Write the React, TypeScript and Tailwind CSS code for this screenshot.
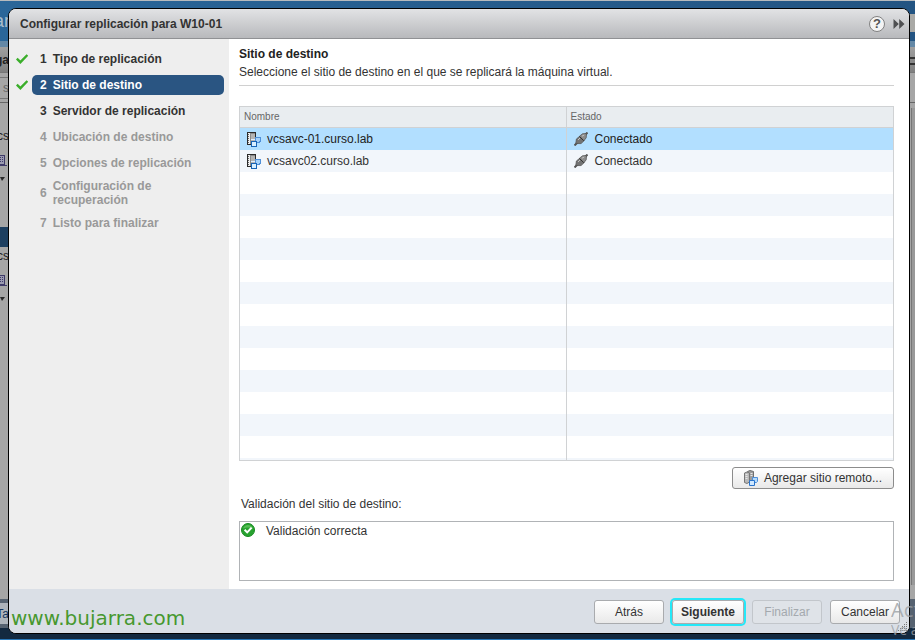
import { useState } from "react";
import clsx from "clsx";

const steps = [
  { name: "Tipo de replicación", done: true, enabled: true },
  { name: "Sitio de destino", done: true, enabled: true },
  { name: "Servidor de replicación", done: false, enabled: true },
  { name: "Ubicación de destino", done: false, enabled: false },
  { name: "Opciones de replicación", done: false, enabled: false },
  { name: "Configuración de recuperación", done: false, enabled: false },
  { name: "Listo para finalizar", done: false, enabled: false },
];

const sites = [
  { name: "vcsavc-01.curso.lab", status: "Conectado" },
  { name: "vcsavc02.curso.lab", status: "Conectado" },
];

// the grid always shows striped rows, even without data
const emptyRows = Array.from({ length: 14 }, (_, i) => i + sites.length);

function StepCheck() {
  return (
    <svg className="w-3 h-3" viewBox="0 0 12 12" fill="none" stroke="#3aae2a" strokeWidth="2.4">
      <path d="M0.8 5.6 4.4 9.2 11.4 2" />
    </svg>
  );
}

function ServerIcon() {
  return (
    <svg className="w-[14px] h-4 shrink-0" viewBox="0 0 14 16" shapeRendering="crispEdges">
      <path d="M0 1h9v13H0z" fill="#2b2b2b" />
      <path d="M1 2h2v11H1z" fill="#f0f0f0" />
      <path d="M1 3h1v1H1zM1 5h1v1H1zM1 7h1v1H1zM1 9h1v1H1zM1 11h1v1H1z" fill="#666" />
      <path d="M3 2h5v11H3z" fill="#b4b4b4" />
      <path d="M3 2h5v1H3zM3 2h1v11H3z" fill="#8a8a8a" />
      <path d="M8 6h6v5h-1v1H8z" fill="#4f8fd8" />
      <path d="M9 7h4v3h-1v1H9z" fill="#a8d3fa" />
      <path d="M4 10h6v6H4z" fill="#1763b5" />
      <path d="M5 11h4v4H5z" fill="#d9efff" />
      <path d="M4 8h4v1H4z" fill="#e0efff" />
    </svg>
  );
}

function AddServerIcon() {
  return (
    <svg className="w-[14px] h-4 shrink-0" viewBox="0 0 14 16">
      <path d="M3.5 1.5 6 0.5 9.5 1.5V11L7 13 3.5 12z" fill="#9c9c9c" stroke="#6e6e6e" />
      <path d="M0.5 3 3 2 5.5 3v9L3 13.5.5 12.5z" fill="#b9b9b9" stroke="#777" />
      <path d="M1.5 4.5h2M1.5 6.5h2M1.5 8.5h2M6.5 3.5h2M6.5 5.5h2" stroke="#e6e6e6" />
      <path d="M8.5 7.5h5v4l-1 1h-4z" fill="#b5dafa" stroke="#4f8fd8" />
      <path d="M5.5 10.5h5v5h-5z" fill="#cfe8ff" stroke="#2a74cc" />
    </svg>
  );
}

function PlugIcon() {
  return (
    <svg className="w-[14px] h-[14px] shrink-0" viewBox="0 0 14 14">
      <path d="M0.5 13.5 3.5 10.5M10 4l3.5-3.5" stroke="#555" strokeWidth="2" />
      <path d="M1.8 11.5 2.4 7l3.4-2.8 4.4 4.4L7 11.6z" fill="#737373" stroke="#555" strokeWidth=".8" />
      <path d="M5.5 4.2 8.5 1.8 12.5 1.5 12.2 5.8 9.9 8.7z" fill="#8c8c8c" stroke="#555" strokeWidth=".8" />
      <path d="M5.5 4.5l4.2 4.2" stroke="#333" />
      <path d="M4 8l2-2M8 4.2l2.2-1.2" stroke="#c4c4c4" />
    </svg>
  );
}

function OkIcon() {
  return (
    <svg className="w-[14px] h-[14px] shrink-0" viewBox="0 0 14 14">
      <circle cx="7" cy="7" r="6.5" fill="#27a22f" stroke="#168a20" />
      <path d="M2 5.5a5.3 5.3 0 0 1 10 0C9 4 5 4 2 5.5z" fill="#55bd55" />
      <path d="M3.6 6.8 6.2 9.4 10.6 4.6" fill="none" stroke="#fff" strokeWidth="2" />
    </svg>
  );
}

function TreeIcon() {
  return (
    <svg className="w-[9px] h-[11px] shrink-0" viewBox="0 0 9 11" shapeRendering="crispEdges">
      <path d="M1 0h6v10H1z" fill="#3e3a68" />
      <path d="M2 1h4v8H2z" fill="#9a9ab0" />
      <path d="M2 2h1v1H2zM4 2h1v1H4zM2 4h1v1H2zM4 4h1v1H4zM2 6h1v1H2zM4 6h1v1H4z" fill="#3e3a68" />
      <path d="M0 10h9v1H0z" fill="#3e3a68" />
    </svg>
  );
}

function TreeGroup() {
  return (
    <div className="flex flex-col items-end">
      <span className="h-[18px] leading-[18px]">vcs</span>
      <div className="h-[30px] flex items-center mr-[2px]">
        <TreeIcon />
      </div>
      <svg className="w-[9px] h-3 shrink-0" viewBox="0 0 9 12">
        <path d="M0 2h5L2 6z" fill="#2a2a2a" />
        <path d="M8.5 0v11" stroke="#2a2a2a" />
      </svg>
    </div>
  );
}

// dimmed application behind the dialog, only its edges stay visible
function Backdrop() {
  return (
    <div className="absolute inset-0 flex flex-col bg-[#a6a6a6] text-xs text-[#222]" aria-hidden="true">
      <div className="h-px bg-[#b7babd]" />
      <div className="h-10 bg-linear-to-r from-[#2a6699] to-[#235482] flex justify-between">
        <div className="w-[10px] flex items-center justify-end overflow-hidden text-lg text-[#a9bccb]">ar</div>
        <div className="w-[10px] h-[18px] mt-[13px] bg-[#a9a9a6]" />
      </div>
      <div className="h-[6px] bg-[#6488a6]" />
      <div className="h-[26px] flex justify-between border-b border-[#777] bg-linear-to-b from-[#a0a0a0] to-[#7f7f7f]">
        <div className="w-[9px] flex items-center justify-end overflow-hidden font-bold">ga</div>
        <div className="w-[10px] h-2 mt-[10px] border-y-2 border-[#333] bg-[#888]" />
      </div>
      <div className="h-[30px] flex justify-between border-b border-[#666]">
        <div className="w-[9px] h-[22px] mt-1 flex items-center justify-end overflow-hidden border-y border-[#777] text-[#666]">s</div>
      </div>
      <div className="flex-1 flex justify-between">
        <div className="w-[9px] flex flex-col pt-6 overflow-hidden">
          <TreeGroup />
          <div className="h-5 mt-10 bg-[#1d3f60] shrink-0" />
          <TreeGroup />
        </div>
        <div className="w-1 mt-[5px] mb-[14px] border-l border-[#777] bg-[#999]" />
      </div>
      <div className="h-[29px] flex justify-between bg-[#566270]">
        <div className="w-[9px] my-1 flex items-center justify-end overflow-hidden bg-[#adb3ba] text-[#14345c]">Ta</div>
      </div>
      <div className="h-[11px] bg-[#13293f]" />
      <div className="h-px bg-[#2a78b8]" />
    </div>
  );
}

const buttonClass =
  "h-6 rounded-[3px] border border-[#a9abae] bg-linear-to-b from-white to-[#e9e9e9] text-[#333] text-center";

export default function App() {
  const [step, setStep] = useState(1);
  const [selected, setSelected] = useState(0);

  return (
    <div className="relative h-screen flex overflow-hidden pt-2 pb-[6px] pl-2 pr-[5px] font-['Liberation_Sans',Arial,sans-serif] text-xs text-[#333]">
      <Backdrop />

      <div role="dialog" className="relative flex-1 flex flex-col rounded-lg border border-black bg-white overflow-hidden">
        {/* Title bar */}
        <header className="h-[30px] shrink-0 flex items-center justify-between pl-[11px] pr-1 border-b border-[#909194] bg-linear-to-b from-[#e2e3e5] to-[#b8b9bc]">
          <h1 className="font-bold">Configurar replicación para W10-01</h1>
          <div className="flex items-center gap-2">
            <button
              className="w-4 h-4 rounded-full border border-[#808080] bg-[#f4f4f4] font-bold text-[13px] leading-[14px] text-[#555]"
              aria-label="Ayuda"
            >
              ?
            </button>
            <button aria-label="Expandir">
              <svg className="w-3 h-[10px]" viewBox="0 0 12 10" fill="#4f5052">
                <path d="M0.5 0 5.8 5 .5 10zM6.2 0 11.5 5 6.2 10z" />
              </svg>
            </button>
          </div>
        </header>

        <div className="flex-1 min-h-0 flex">
          {/* Steps */}
          <nav className="w-[220px] shrink-0 bg-[#eee] pt-[10px] pl-[7px] pr-[5px]">
            <ol className="flex flex-col gap-[6px] font-bold leading-[14px]">
              {steps.map((item, i) => (
                <li key={item.name} className="flex items-center gap-1">
                  <span className="w-3 shrink-0">{item.done && <StepCheck />}</span>
                  <button
                    disabled={!item.enabled}
                    onClick={() => setStep(i)}
                    className={clsx(
                      "flex-1 min-h-5 flex items-center gap-[6px] px-2 rounded-[5px] text-left",
                      i === step && "bg-[#2a5582] text-white",
                      !item.enabled && "text-[#999]"
                    )}
                  >
                    <span>{i + 1}</span>
                    <span>{item.name}</span>
                  </button>
                </li>
              ))}
            </ol>
          </nav>

          {/* Page content */}
          <main className="flex-1 min-w-0 flex flex-col pt-[6px] pb-2 pl-[10px] pr-[15px]">
            <div className="pb-1 border-b border-[#d0d0d0] leading-[18px]">
              <h2 className="font-bold text-[#222]">Sitio de destino</h2>
              <p>Seleccione el sitio de destino en el que se replicará la máquina virtual.</p>
            </div>

            <div className="mt-5 flex-1 min-h-0 overflow-hidden border border-[#d0d2d4]">
              <table className="w-full table-fixed border-separate border-spacing-0">
                <thead>
                  <tr className="h-[21px] bg-[#e9edf0] text-[10px] leading-4 text-[#666] text-left">
                    <th className="p-0 pl-1 font-normal border-r border-b border-[#d0d2d4]">Nombre</th>
                    <th className="p-0 pl-1 font-normal border-b border-[#d0d2d4]">Estado</th>
                  </tr>
                </thead>
                <tbody>
                  {sites.map((site, i) => (
                    <tr
                      key={site.name}
                      onClick={() => setSelected(i)}
                      className={clsx("h-[22px]", i === selected ? "bg-[#b2dfff] text-[#222]" : "even:bg-[#f2f6fb]")}
                    >
                      <td className="p-0 pl-[7px] border-r border-[#d0d2d4]">
                        <div className="flex items-center gap-[6px]">
                          <ServerIcon />
                          {site.name}
                        </div>
                      </td>
                      <td className="p-0 pl-[7px]">
                        <div className="flex items-center gap-[7px]">
                          <PlugIcon />
                          {site.status}
                        </div>
                      </td>
                    </tr>
                  ))}
                  {emptyRows.map((row) => (
                    <tr key={row} className="h-[22px] even:bg-[#f2f6fb]">
                      <td className="p-0 border-r border-[#d0d2d4]" />
                      <td className="p-0" />
                    </tr>
                  ))}
                </tbody>
              </table>
            </div>

            <button className="mt-[6px] h-[22px] shrink-0 self-end flex items-center gap-[6px] px-[11px] rounded-[3px] border border-[#8c8c8c] bg-linear-to-b from-white to-[#e9e9e9]">
              <AddServerIcon />
              Agregar sitio remoto...
            </button>

            <h3 className="mt-[6px] pl-[2px] leading-[18px]">Validación del sitio de destino:</h3>
            <div className="mt-2 h-[60px] shrink-0 flex items-start gap-[11px] p-px border border-[#b0b3b6]">
              <OkIcon />
              <p className="leading-4">Validación correcta</p>
            </div>
          </main>
        </div>

        {/* Footer */}
        <footer className="h-11 shrink-0 flex items-center justify-between pt-[2px] pl-[2px] pr-[9px] bg-[#dadfe6]">
          <span className="pt-3 font-['DejaVu_Sans',sans-serif] text-xl text-[#47982f]">www.bujarra.com</span>
          <div className="flex gap-2">
            <button className={clsx(buttonClass, "w-[70px]")} onClick={() => setStep(Math.max(step - 1, 0))}>
              Atrás
            </button>
            <button
              className={clsx(buttonClass, "w-[72px] font-bold ring-2 ring-[#25e8f8]")}
              onClick={() => setStep(Math.min(step + 1, 2))}
            >
              Siguiente
            </button>
            <button
              disabled
              className="w-[70px] h-6 rounded-[3px] border border-[#c2c6cb] bg-[#dfe3e8] text-[#a4a9ae] text-center"
            >
              Finalizar
            </button>
            <button className={clsx(buttonClass, "w-[70px]")}>Cancelar</button>
          </div>
        </footer>

        {/* Resize grip */}
        <svg className="absolute right-[2px] bottom-[2px] w-[9px] h-[9px]" viewBox="0 0 9 9" fill="#777" shapeRendering="crispEdges">
          <path d="M8 0h1v1H8zM6 2h1v1H6zM8 2h1v1H8zM4 4h1v1H4zM6 4h1v1H6zM8 4h1v1H8zM2 6h1v1H2zM4 6h1v1H4zM6 6h1v1H6zM8 6h1v1H8zM0 8h1v1H0zM2 8h1v1H2zM4 8h1v1H4zM6 8h1v1H6zM8 8h1v1H8z" />
        </svg>
      </div>

      {/* Windows activation notice */}
      <div className="absolute right-0 bottom-0 w-6 h-[42px] overflow-hidden whitespace-nowrap pointer-events-none font-['Open_Sans',sans-serif] text-[#9a9fa4]/80">
        <p className="text-xl leading-6">Act</p>
        <p className="text-sm leading-4">Ve a</p>
      </div>
    </div>
  );
}
